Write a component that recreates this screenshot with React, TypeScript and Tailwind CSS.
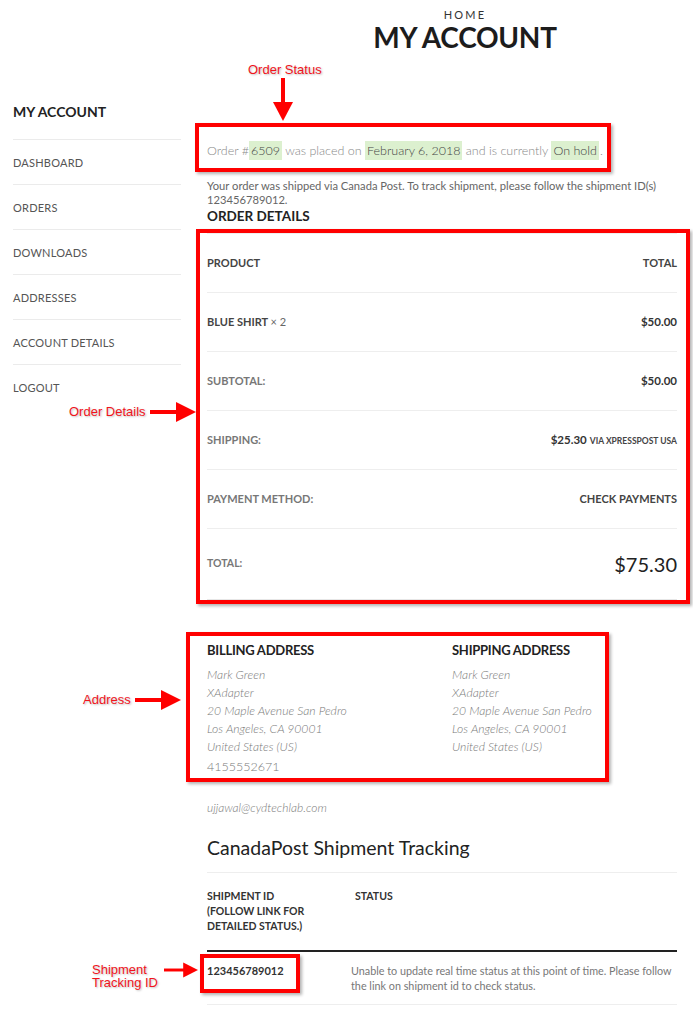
import React from 'react';

const sideLinks = ['Dashboard', 'Orders', 'Downloads', 'Addresses', 'Account details', 'Logout'];

const orderRows = [
    { label: 'Subtotal:', value: '$50.00' },
    { label: 'Shipping:', value: '$25.30', note: 'via Xpresspost USA' },
    { label: 'Payment method:', value: 'Check payments', plain: true },
];

const address = ['Mark Green', 'XAdapter', '20 Maple Avenue San Pedro', 'Los Angeles, CA 90001', 'United States (US)'];

function Arrow({ dir, className }: { dir: 'down' | 'right'; className: string }) {
    if (dir === 'down') {
        return (
            <svg className={className} viewBox="0 0 20 43">
                <rect x="8" y="0" width="4" height="26" fill="#ff0000" />
                <polygon points="0,24 20,24 10,43" fill="#ff0000" />
            </svg>
        );
    }
    return (
        <svg className={className} viewBox="0 0 46 20">
            <rect x="0" y="8" width="28" height="4" fill="#ff0000" />
            <polygon points="26,0 26,20 46,10" fill="#ff0000" />
        </svg>
    );
}

function Note({ children, className }: { children: React.ReactNode; className: string }) {
    return (
        <div className={`absolute font-['Liberation_Sans',Arial,sans-serif] text-[13px] leading-[13px] text-[#f0141c] [text-shadow:1px_1px_2px_rgba(0,0,0,0.25)] ${className}`}>
            {children}
        </div>
    );
}

export default function App() {
    return (
        <div className="relative w-[693px] h-[1024px] overflow-hidden bg-white font-['Lato','Open_Sans',sans-serif] text-[#333]">
            {/* Page title */}
            <header className="h-[60px] pl-[237px] pt-[9px] text-center">
                <div className="text-[11px] leading-[12px] tracking-[0.2em] text-[#333]">HOME</div>
                <h1 className="mt-[2px] text-[28px] leading-[28px] font-bold text-[#1c1c1c] tracking-[-0.01em]">MY ACCOUNT</h1>
            </header>

            <div className="flex">
                {/* Sidebar */}
                <aside className="ml-[13px] w-[168px] pt-[44px]">
                    <h2 className="h-[35px] text-[14px] leading-[16px] font-bold text-[#222]">MY ACCOUNT</h2>
                    {sideLinks.map((link) => (
                        <div
                            key={link}
                            className="h-[45px] pt-[2px] flex items-center border-t border-[#ebebeb] text-[11px] uppercase tracking-[0.02em] text-[#555]"
                        >
                            {link}
                        </div>
                    ))}
                </aside>

                {/* Main column */}
                <main className="ml-[26px] w-[470px]">
                    {/* Order status */}
                    <div className="mt-[63px] ml-[-12px] w-[416px] h-[49px] border-4 border-[#ff0000] shadow-[2px_2px_3px_rgba(0,0,0,0.3)] pl-[8px] pt-[14px]">
                        <p className="text-[12.5px] leading-[20px] font-light text-[#888] whitespace-nowrap">
                            Order #<mark className="bg-[#dcf0cf] text-[#444] px-[2px] py-[2px]">6509</mark> was placed on{' '}
                            <mark className="bg-[#dcf0cf] text-[#444] px-[2px] py-[2px]">February 6, 2018</mark> and is currently{' '}
                            <mark className="bg-[#dcf0cf] text-[#444] px-[2px] py-[2px]">On hold</mark>
                            <span className="ml-[1px]">.</span>
                        </p>
                    </div>

                    <p className="mt-[7px] text-[11.2px] leading-[14px] text-[#666]">
                        Your order was shipped via Canada Post. To track shipment, please follow the shipment ID(s) 123456789012.
                    </p>
                    <h3 className="mt-[1px] text-[13.5px] leading-[16px] font-bold text-[#222]">ORDER DETAILS</h3>

                    {/* Order details */}
                    <div className="mt-[5px] ml-[-11px] w-[494px] border-4 border-[#ff0000] shadow-[2px_2px_3px_rgba(0,0,0,0.3)] pl-[7px] pr-[9px]">
                        <div className="border-t border-[#eeeeee]">
                            <div className="h-[59px] border-b border-[#eeeeee] flex items-center justify-between text-[11px] font-bold text-[#444]">
                                <span>PRODUCT</span>
                                <span>TOTAL</span>
                            </div>
                            <div className="h-[59px] border-b border-[#eeeeee] flex items-center justify-between text-[11px] font-bold text-[#444]">
                                <span>
                                    BLUE SHIRT <span className="font-normal text-[#666]">× 2</span>
                                </span>
                                <span className="text-[11.5px] text-[#333]">$50.00</span>
                            </div>
                            {orderRows.map((row) => (
                                <div key={row.label} className="h-[59px] border-b border-[#eeeeee] flex items-center justify-between">
                                    <span className="text-[11px] font-bold uppercase text-[#777]">{row.label}</span>
                                    {row.plain ? (
                                        <span className="text-[11px] font-bold uppercase text-[#444]">{row.value}</span>
                                    ) : (
                                        <span className="text-[11.5px] font-bold text-[#333]">
                                            {row.value}
                                            {row.note && <span className="ml-[3px] text-[8.5px] uppercase text-[#444]">{row.note}</span>}
                                        </span>
                                    )}
                                </div>
                            ))}
                            <div className="h-[71px] border-b border-[#e6e6e6] flex items-center justify-between">
                                <span className="text-[10.5px] font-bold text-[#777]">TOTAL:</span>
                                <span className="text-[20px] text-[#222]">$75.30</span>
                            </div>
                        </div>
                    </div>

                    {/* Addresses */}
                    <div className="mt-[28px] ml-[-21px] w-[423px] h-[150px] border-4 border-[#ff0000] shadow-[2px_2px_3px_rgba(0,0,0,0.3)] pl-[17px] pt-[5px] flex">
                        <div className="w-[245px]">
                            <h4 className="text-[13px] leading-[18px] font-bold text-[#222] tracking-[-0.02em] mb-[7px]">BILLING ADDRESS</h4>
                            {address.map((line) => (
                                <div key={line} className="text-[12.2px] leading-[18px] italic font-light text-[#7a7a7a]">{line}</div>
                            ))}
                            <div className="mt-[2px] text-[12.5px] leading-[18px] font-light text-[#7a7a7a]">4155552671</div>
                        </div>
                        <div>
                            <h4 className="text-[13px] leading-[18px] font-bold text-[#222] tracking-[-0.02em] mb-[7px]">SHIPPING ADDRESS</h4>
                            {address.map((line) => (
                                <div key={line} className="text-[12.2px] leading-[18px] italic font-light text-[#7a7a7a]">{line}</div>
                            ))}
                        </div>
                    </div>

                    <div className="mt-[17px] text-[12px] leading-[18px] italic font-light text-[#7a7a7a]">ujjawal@cydtechlab.com</div>

                    {/* Tracking */}
                    <h3 className="mt-[18px] text-[19.5px] leading-[26px] text-[#222]">CanadaPost Shipment Tracking</h3>
                    <div className="mt-[11px] border-t border-[#eeeeee]">
                        <div className="flex pt-[16px] pb-[16px] border-b-2 border-[#222] text-[10.5px] leading-[15px] font-bold text-[#333]">
                            <div className="w-[148px]">
                                SHIPMENT ID
                                <br />
                                (FOLLOW LINK FOR
                                <br />
                                DETAILED STATUS.)
                            </div>
                            <div>STATUS</div>
                        </div>
                        <div className="flex pt-[11px] pb-[11px] border-b border-[#eeeeee] leading-[15px]">
                            <div className="relative w-[144px] text-[11px] font-bold text-[#333]">
                                123456789012
                                <div className="absolute left-[-7px] top-[-9px] w-[100px] h-[39px] border-4 border-[#ff0000] shadow-[2px_2px_3px_rgba(0,0,0,0.3)]" />
                            </div>
                            <div className="flex-1 text-[10.8px] text-[#777]">
                                Unable to update real time status at this point of time. Please follow the link on shipment id to check status.
                            </div>
                        </div>
                    </div>
                </main>
            </div>

            {/* Annotations */}
            <Note className="left-[248px] top-[63px]">Order Status</Note>
            <Arrow dir="down" className="absolute left-[273px] top-[78px] w-[20px] h-[43px]" />

            <Note className="left-[69px] top-[405px]">Order Details</Note>
            <Arrow dir="right" className="absolute left-[150px] top-[402px] w-[46px] h-[20px]" />

            <Note className="left-[83px] top-[693px]">Address</Note>
            <Arrow dir="right" className="absolute left-[135px] top-[690px] w-[46px] h-[20px]" />

            <Note className="left-[92px] top-[963px]">
                Shipment
                <br />
                Tracking ID
            </Note>
            <Arrow dir="right" className="absolute left-[164px] top-[960px] w-[34px] h-[20px]" />
        </div>
    );
}
